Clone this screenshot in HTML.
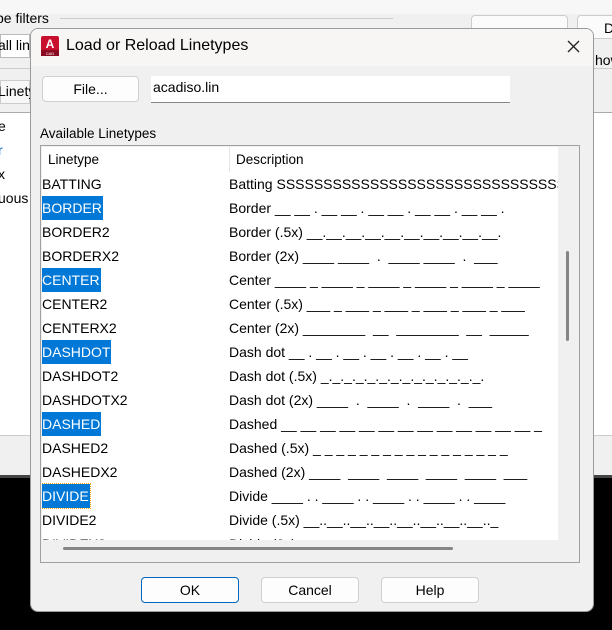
<!DOCTYPE html>
<html><head><meta charset="utf-8"><style>
*{margin:0;padding:0;box-sizing:border-box}
body{width:612px;height:630px;overflow:hidden;background:#000;font-family:"Liberation Sans",Arial,sans-serif;position:relative;font-size:14px;color:#000}
.a{position:absolute}
.row{position:absolute;left:0;height:24px;line-height:24px;white-space:nowrap}
.sel{background:#0078d7;color:#fff;padding:0 1px 0 0}
.btn{position:absolute;height:26px;background:#fdfdfd;border:1px solid #d0d0d0;border-radius:4px;text-align:center;line-height:24px;font-size:14px}
</style></head><body>
<div class="a" style="left:0;top:0;width:612px;height:478px;background:#f0f0f0"></div>
<div class="a" style="left:0;top:0;width:612px;height:14px;background:#f7f7f7"></div>
<div class="a" style="left:-4px;top:10px;font-size:14px">pe filters</div>
<div class="a" style="left:60px;top:18px;width:333px;border-top:1px solid #ccc"></div>
<div class="a" style="left:0;top:34px;width:30px;height:24px;background:#fff;border:1px solid #bbb"></div>
<div class="a" style="left:-2px;top:37px;font-size:14px">all lin</div>
<div class="a" style="left:471px;top:15px;width:97px;height:24px;background:#fbfbfb;border:1px solid #ccc;border-radius:4px"></div>
<div class="a" style="left:577px;top:15px;width:40px;height:24px;background:#fbfbfb;border:1px solid #ccc;border-radius:4px"></div>
<div class="a" style="left:604px;top:20px;font-size:14px">D</div>
<div class="a" style="left:595px;top:52px;font-size:14px">how</div>
<div class="a" style="left:0;top:68px;width:612px;border-top:1px solid #ccc"></div>
<div class="a" style="left:0;top:80px;width:30px;height:24px;background:#f7f7f7;border:1px solid #ccc"></div>
<div class="a" style="left:-2px;top:83px;font-size:14px">Linety</div>
<div class="a" style="left:0;top:112px;width:612px;height:323px;background:#fff;border-top:1px solid #aaa"></div>
<div class="a" style="left:-2px;top:118px;font-size:14px">e</div>
<div class="a" style="left:-2px;top:142px;font-size:14px;color:#0066cc">r</div>
<div class="a" style="left:-2px;top:166px;font-size:14px">x</div>
<div class="a" style="left:-2px;top:190px;font-size:14px">uous</div>
<div class="a" style="left:0;top:435px;width:612px;height:43px;background:#f0f0f0;border-top:1px solid #ccc"></div>
<div class="a" style="left:0;top:475px;width:612px;height:3px;background:#444"></div>

<div class="a" style="left:30px;top:28px;width:564px;height:584px;background:#f0f0f0;border:1px solid #9a9a9a;border-radius:8px;overflow:hidden">
  <div class="a" style="left:0;top:0;width:564px;height:37px;background:#f8f6f5"></div>
  <svg class="a" style="left:10px;top:7px" width="18" height="20" viewBox="0 0 18 20"><rect x="0" y="0" width="18" height="20" rx="2" fill="#c8102e"/><rect x="0" y="14" width="18" height="6" fill="#8a0a22"/><text x="9" y="12" font-family="Liberation Sans" font-weight="bold" font-size="12" fill="#fff" text-anchor="middle">A</text><text x="9" y="19" font-family="Liberation Sans" font-size="4" fill="#fff" text-anchor="middle">CAD</text></svg>
  <div class="a" style="left:35px;top:8px;font-size:16px">Load or Reload Linetypes</div>
  <svg class="a" style="left:536px;top:11px" width="13" height="13" viewBox="0 0 13 13"><path d="M1 1L12 12M12 1L1 12" stroke="#222" stroke-width="1.3"/></svg>
  <div class="btn" style="left:11px;top:47px;width:97px;height:26px">File...</div>
  <div class="a" style="left:120px;top:47px;width:359px;height:27px;background:#fff;border-bottom:1px solid #888;padding:3px 2px;font-size:14px">acadiso.lin</div>
  <div class="a" style="left:9px;top:97px;font-size:13.5px">Available Linetypes</div>
  <div class="a" style="left:9px;top:116px;width:540px;height:418px;border:1px solid #a0a0a0;background:#f0f0f0">
    <div class="a" style="left:1px;top:1px;width:516px;height:393px;background:#fff;overflow:hidden">
      <div class="a" style="left:6px;top:5px;font-size:13.5px">Linetype</div>
      <div class="a" style="left:187px;top:0;height:25px;border-left:1px solid #e5e5e5"></div>
      <div class="a" style="left:194px;top:5px;font-size:13.5px">Description</div>
      <div class="a" style="left:0;top:25px;width:520px">
        <div class="row" style="top:0">BATTING</div>
        <div class="row sel" style="top:24px">BORDER</div>
        <div class="row" style="top:48px">BORDER2</div>
        <div class="row" style="top:72px">BORDERX2</div>
        <div class="row sel" style="top:96px">CENTER</div>
        <div class="row" style="top:120px">CENTER2</div>
        <div class="row" style="top:144px">CENTERX2</div>
        <div class="row sel" style="top:168px">DASHDOT</div>
        <div class="row" style="top:192px">DASHDOT2</div>
        <div class="row" style="top:216px">DASHDOTX2</div>
        <div class="row sel" style="top:240px">DASHED</div>
        <div class="row" style="top:264px">DASHED2</div>
        <div class="row" style="top:288px">DASHEDX2</div>
        <div class="row sel" style="top:312px;outline:1px dotted #f0a000">DIVIDE</div>
        <div class="row" style="top:336px">DIVIDE2</div>
        <div class="row" style="top:360px">DIVIDEX2</div>
      </div>
      <div class="a" style="left:187px;top:25px;width:329px;overflow:hidden;height:380px">
        <div class="row" style="top:0">Batting SSSSSSSSSSSSSSSSSSSSSSSSSSSSSSSSSSS</div>
        <div class="row" style="top:24px">Border __ __ . __ __ . __ __ . __ __ . __ __ .</div>
        <div class="row" style="top:48px">Border (.5x) __.__.__.__.__.__.__.__.__.__.</div>
        <div class="row" style="top:72px">Border (2x) ____ ____ &nbsp;. &nbsp;____ ____ &nbsp;. &nbsp;___</div>
        <div class="row" style="top:96px">Center ____ _ ____ _ ____ _ ____ _ ____ _ ____</div>
        <div class="row" style="top:120px">Center (.5x) ___ _ ___ _ ___ _ ___ _ ___ _ ___</div>
        <div class="row" style="top:144px">Center (2x) ________ &nbsp;__ &nbsp;________ &nbsp;__ &nbsp;_____</div>
        <div class="row" style="top:168px">Dash dot __ . __ . __ . __ . __ . __ . __</div>
        <div class="row" style="top:192px">Dash dot (.5x) _._._._._._._._._._._._._._.</div>
        <div class="row" style="top:216px">Dash dot (2x) ____ &nbsp;. &nbsp;____ &nbsp;. &nbsp;____ &nbsp;. &nbsp;___</div>
        <div class="row" style="top:240px">Dashed __ __ __ __ __ __ __ __ __ __ __ __ __ _</div>
        <div class="row" style="top:264px">Dashed (.5x) _ _ _ _ _ _ _ _ _ _ _ _ _ _ _ _ _</div>
        <div class="row" style="top:288px">Dashed (2x) ____ &nbsp;____ &nbsp;____ &nbsp;____ &nbsp;____ &nbsp;___</div>
        <div class="row" style="top:312px">Divide ____ . . ____ . . ____ . . ____ . . ____</div>
        <div class="row" style="top:336px">Divide (.5x) __..__..__..__..__..__..__..__.._</div>
        <div class="row" style="top:360px">Divide (2x)</div>
      </div>
    </div>
    <div class="a" style="left:22px;top:401px;width:390px;height:3px;background:#858585;border-radius:2px"></div>
    <div class="a" style="left:525px;top:105px;width:3px;height:90px;background:#858585;border-radius:2px"></div>
  </div>
  <div class="btn" style="left:110px;top:548px;width:98px;border:1px solid #0067c0">OK</div>
  <div class="btn" style="left:230px;top:548px;width:98px">Cancel</div>
  <div class="btn" style="left:350px;top:548px;width:98px">Help</div>
</div>
</body></html>
